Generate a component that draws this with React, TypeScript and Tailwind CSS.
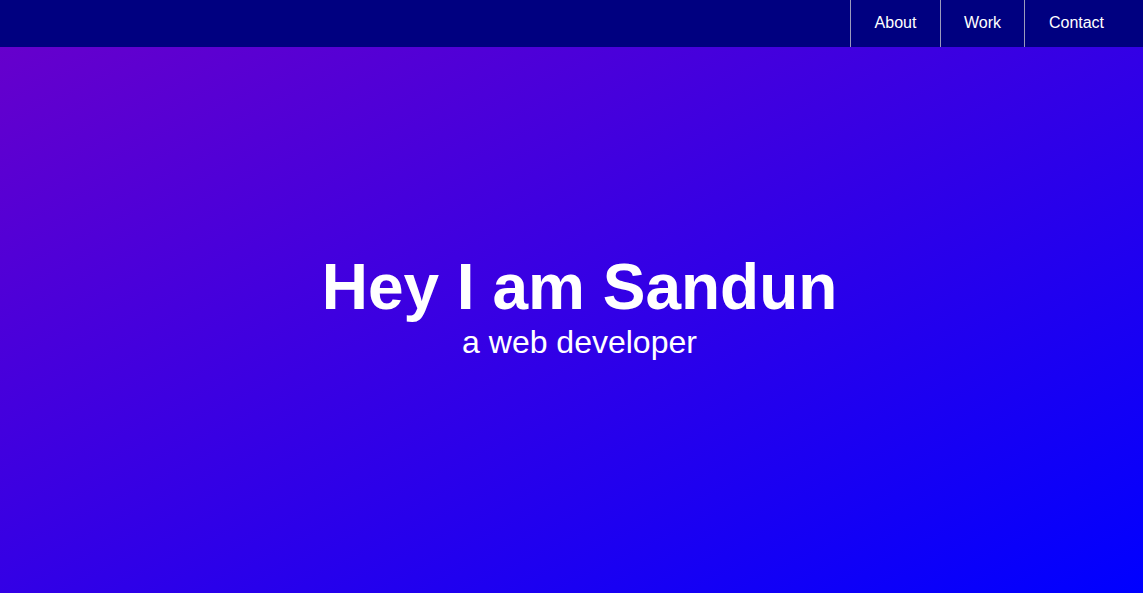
import React from "react";

const LINKS = [
  { label: "About", w: "w-[90px]" },
  { label: "Work", w: "w-[84px]" },
  { label: "Contact", w: "w-[104px]" },
];

export default function App() {
  return (
    <div className="min-h-[593px] flex flex-col font-['Liberation_Sans',Arial,sans-serif] text-white">
      <nav className="h-[47px] bg-[#000080] flex justify-end pr-[15px]">
        {LINKS.map((l) => (
          <a
            key={l.label}
            href="#"
            className={`${l.w} h-full flex items-center justify-center pb-[2px] border-l border-[#9b9bbd] text-[16px] leading-[normal]`}
          >
            {l.label}
          </a>
        ))}
      </nav>
      <section className="h-[546px] bg-[linear-gradient(to_bottom_right,#6600cc,#0000ff)] flex flex-col items-center pt-[203px] pl-4">
        <h1 className="text-[64px] font-bold leading-[normal]">Hey I am Sandun</h1>
        <p className="text-[32px] leading-[normal]">a web developer</p>
      </section>
    </div>
  );
}
